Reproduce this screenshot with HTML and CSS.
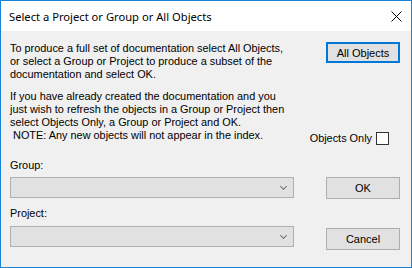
FILE: index.html
```html
<!DOCTYPE html>
<html lang="en">
<head>
    <meta charset="UTF-8">
    <title>Select a Project or Group or All Objects</title>
    <link rel="stylesheet" href="styles.css">
</head>
<body>

<div class="window">
    <!-- title bar -->
    <div class="titlebar">
        <span class="title">Select a Project or Group or All Objects</span>
        <span class="close">
            <svg width="11" height="11" viewBox="0 0 11 11"><path d="M0.5 0.5 L10.5 10.5 M10.5 0.5 L0.5 10.5" stroke="#000" stroke-width="1" fill="none"/></svg>
        </span>
    </div>

    <div class="content">
        <div class="top-row">
            <div class="info">
                <p>To produce a full set of documentation select All Objects,<br>or select a Group or Project to produce a subset of the<br>documentation and select OK.</p>
                <p>If you have already created the documentation and you<br>just wish to refresh the objects in a Group or Project then<br>select Objects Only, a Group or Project and OK.<br>&nbsp;NOTE: Any new objects will not appear in the index.</p>
            </div>
            <div class="side">
                <button class="btn default">All Objects</button>
                <label class="check">Objects Only <span class="box"></span></label>
            </div>
        </div>

        <div class="field-label first">Group:</div>
        <div class="field-row">
            <div class="combo"><span class="arrow"></span></div>
            <button class="btn">OK</button>
        </div>

        <div class="field-label">Project:</div>
        <div class="field-row">
            <div class="combo"><span class="arrow"></span></div>
            <button class="btn cancel">Cancel</button>
        </div>
    </div>
</div>

</body>
</html>
```

FILE: styles.css
```css
* { box-sizing: border-box; margin: 0; padding: 0; }
body { font-family: 'Liberation Sans', Arial, sans-serif; font-size: 10.9px; color: #000; background: #f0f0f0; }

.window {
    width: 412px;
    height: 268px;
    border: 1px solid #1883d7;
    background: #f0f0f0;
    display: flex;
    flex-direction: column;
}

/* 标题栏 */
.titlebar {
    height: 30px;
    background: #fff;
    display: flex;
    align-items: center;
    justify-content: space-between;
    padding: 0 9px 0 8px;
}
.title {
    font-family: 'Noto Sans', sans-serif;
    font-size: 11.2px;
    padding-top: 1px;
}
.close {
    display: flex;
}

/* 内容 */
.content {
    padding: 11px 11px 0 9px;
    line-height: 13px;
}
.top-row {
    display: flex;
    justify-content: space-between;
}
.info p { white-space: nowrap; }
.info p + p { margin-top: 9px; }

.side {
    width: 74px;
    display: flex;
    flex-direction: column;
    justify-content: space-between;
    align-items: flex-end;
}
.check {
    display: flex;
    align-items: center;
    gap: 4px;
    white-space: nowrap;
    margin-right: 11px;
    margin-bottom: -3px;
}
.check .box {
    width: 13px;
    height: 13px;
    border: 1px solid #333;
    background: #fff;
}

/* 按钮 */
.btn {
    width: 74px;
    height: 22px;
    font-family: inherit;
    font-size: 11px;
    color: #000;
    background: #e1e1e1;
    border: 1px solid #adadad;
}
.btn.default {
    height: 21px;
    border: 2px solid #0078d7;
}
.btn.cancel { margin-top: 2px; }

.field-label { margin-top: 8px; margin-bottom: 6px; }
.field-label.first { margin-top: 17px; margin-bottom: 5px; }

.field-row {
    display: flex;
    justify-content: space-between;
    align-items: flex-start;
}
.combo {
    width: 284px;
    height: 21px;
    background: #e1e1e1;
    border: 1px solid #b0b0b0;
    position: relative;
}
.combo .arrow {
    position: absolute;
    right: 7px;
    top: 6px;
    width: 5px;
    height: 5px;
    border-right: 1px solid #707070;
    border-bottom: 1px solid #707070;
    transform: rotate(45deg);
}
```
